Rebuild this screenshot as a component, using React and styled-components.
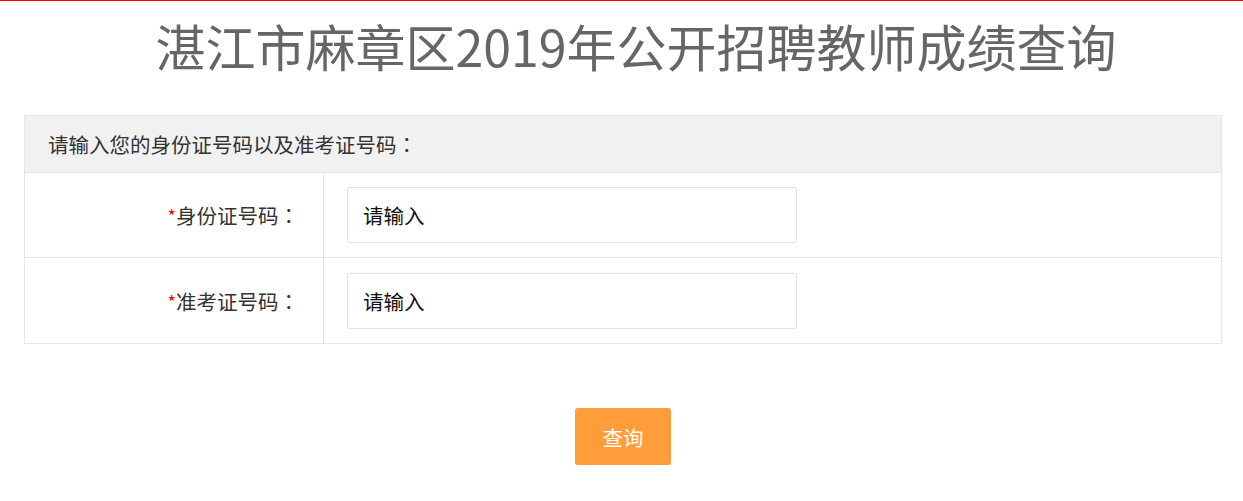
import styled, { createGlobalStyle } from "styled-components";

const GlobalStyle = createGlobalStyle`
  html, body {
    margin: 0;
    padding: 0;
    background: #fff;
  }
  body {
    font-family: "Noto Sans CJK SC", "Liberation Sans", sans-serif;
    border-top: 1px solid #ff0000;
  }
  * {
    box-sizing: border-box;
  }
`;

const Page = styled.div`
  padding: 0 21px 0 24px;
`;

const Title = styled.h1`
  margin: 0;
  height: 114px;
  padding-top: 12px;
  padding-left: 26px;
  text-align: center;
  font-size: 50px;
  line-height: 64px;
  font-weight: 400;
  color: #666;
`;

// full-width colon centred in its box, as in the original page
const Colon = styled.span`
  font-family: "Noto Sans CJK TC", "Noto Sans CJK SC", sans-serif;
`;

const Form = styled.div`
  border: 1px solid #e6e6e6;
`;

const Head = styled.div`
  height: 57px;
  padding-left: 23px;
  display: flex;
  align-items: center;
  background: #f1f1f1;
  border-bottom: 1px solid #e6e6e6;
  font-size: 20.5px;
  color: #333;
`;

const Row = styled.div`
  display: grid;
  grid-template-columns: 299px 1fr;
  height: 85px;
  border-bottom: ${(p) => (p.$last ? "none" : "1px solid #e6e6e6")};
`;

const Label = styled.label`
  display: flex;
  align-items: center;
  justify-content: flex-end;
  padding-right: 24px;
  border-right: 1px solid #e6e6e6;
  font-size: 20.5px;
  color: #333;
`;

const Star = styled.span`
  color: #ff0000;
  font-size: 18px;
`;

const Cell = styled.div`
  display: flex;
  align-items: center;
  padding-left: 23px;
`;

const Input = styled.input`
  width: 450px;
  height: 56px;
  padding: 0 15px;
  border: 1px solid #e2e2e2;
  border-radius: 2px;
  font-family: inherit;
  font-size: 20.5px;
  color: #111;
  outline: none;
  &::placeholder {
    color: #111;
  }
`;

const Actions = styled.div`
  display: flex;
  justify-content: center;
  padding-top: 64px;
`;

const Button = styled.button`
  width: 96px;
  height: 57px;
  border: none;
  border-radius: 3px;
  background: #ff9d3a;
  color: #fff;
  font-family: inherit;
  font-size: 20.5px;
  cursor: pointer;
`;

const fields = [
  { id: "idcard", label: "身份证号码" },
  { id: "ticket", label: "准考证号码" },
];

export default function App() {
  return (
    <>
      <GlobalStyle />
      <Page>
        <Title>湛江市麻章区2019年公开招聘教师成绩查询</Title>
        <Form>
          <Head>
            请输入您的身份证号码以及准考证号码<Colon>：</Colon>
          </Head>
          {fields.map((f, i) => (
            <Row key={f.id} $last={i === fields.length - 1}>
              <Label htmlFor={f.id}>
                <Star>*</Star>
                {f.label}
                <Colon>：</Colon>
              </Label>
              <Cell>
                <Input id={f.id} placeholder="请输入" />
              </Cell>
            </Row>
          ))}
        </Form>
        <Actions>
          <Button>查询</Button>
        </Actions>
      </Page>
    </>
  );
}
